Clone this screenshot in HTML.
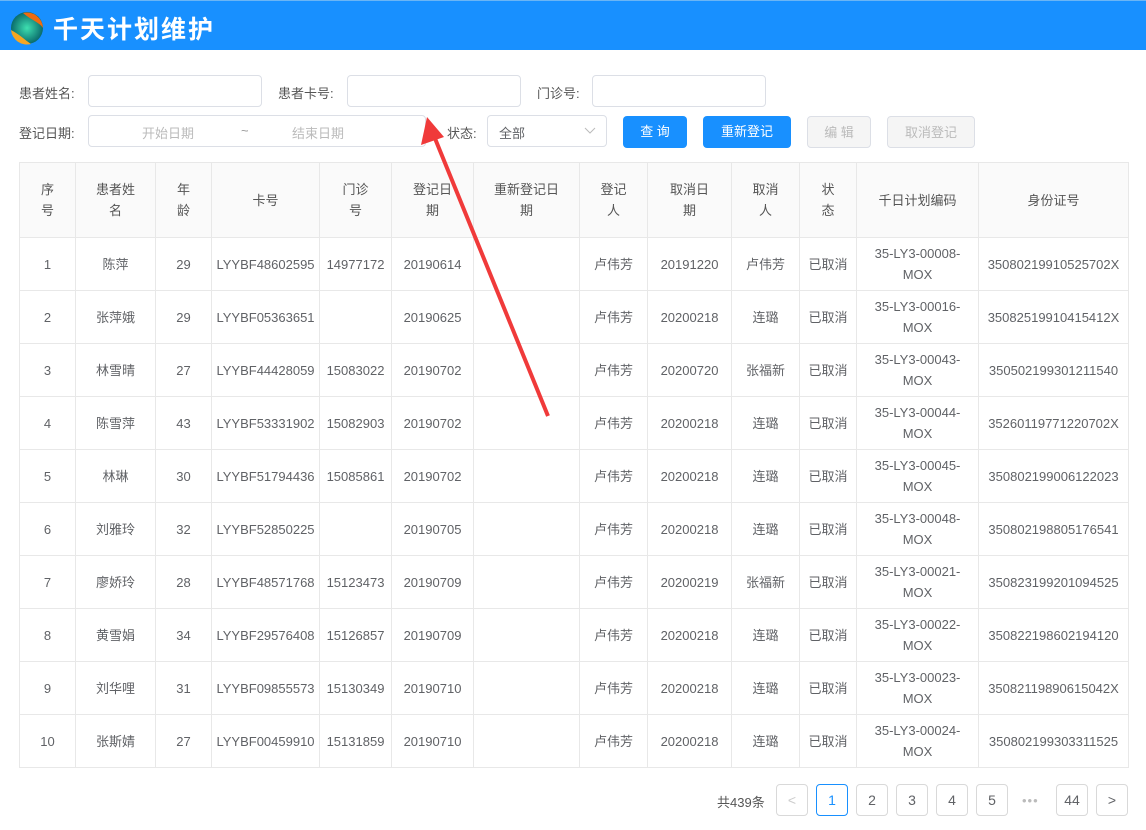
<!DOCTYPE html>
<html><head><meta charset="utf-8"><style>
*{box-sizing:border-box;margin:0;padding:0}
body{width:1146px;height:830px;background:#fff;font-family:"Liberation Sans","Noto Sans CJK SC",sans-serif;font-size:13px;color:#606266;position:relative;overflow:hidden}
.hdr{position:absolute;left:0;top:0;width:1146px;height:50px;background:#1890ff;border-top:1px solid #6bb5f5}
.hdr .t{position:absolute;left:53px;top:9px;color:#fff;font-size:25px;font-weight:bold;letter-spacing:2px}
.lbl{position:absolute;font-size:13px;color:#555}
.inp{position:absolute;border:1px solid #dcdfe6;border-radius:4px;height:32px;background:#fff}
.btn{position:absolute;height:32px;border-radius:4px;font-size:13px;text-align:center;line-height:32px}
.pri{background:#1890ff;color:#fff}
.dis{background:#f5f5f5;color:#bbb;border:1px solid #dcdfe6}
table{position:absolute;left:19px;top:162px;border-collapse:collapse;table-layout:fixed;width:1109px}
td,th{border:1px solid #e8e8e8;text-align:center;font-weight:normal;font-size:13px;color:#606266;line-height:21px;padding:0 2px}
th{background:#fafafa;height:75px;color:#555}
td{height:53px}
.pg{position:absolute;top:784px;width:32px;height:32px;border:1px solid #d9d9d9;border-radius:4px;text-align:center;line-height:30px;font-size:14px;color:#606266}
</style></head><body>
<div class="hdr">
<svg style="position:absolute;left:9px;top:9px" width="36" height="36" viewBox="0 0 36 36">
<defs><radialGradient id="g" cx="50%" cy="50%" r="50%"><stop offset="0" stop-color="#3ee0b0"/><stop offset="1" stop-color="#0a6b6b"/></radialGradient></defs>
<circle cx="18" cy="18" r="16" fill="url(#g)"/>
<path d="M14 3 A16 16 0 0 1 34 18 C30 12 22 10 14 3Z" fill="#f06a10"/>
<path d="M2 20 A16 16 0 0 0 22 34 C16 30 10 24 2 20Z" fill="#f5a623"/>
</svg>
<div class="t">千天计划维护</div></div>

<div class="lbl" style="left:19px;top:83px">患者姓名:</div>
<div class="inp" style="left:88px;top:75px;width:174px"></div>
<div class="lbl" style="left:278px;top:83px">患者卡号:</div>
<div class="inp" style="left:347px;top:75px;width:174px"></div>
<div class="lbl" style="left:537px;top:83px">门诊号:</div>
<div class="inp" style="left:592px;top:75px;width:174px"></div>

<div class="lbl" style="left:19px;top:123px">登记日期:</div>
<div class="inp" style="left:88px;top:115px;width:338px"><span style="position:absolute;left:53px;top:7px;color:#bbb">开始日期</span><span style="position:absolute;left:152px;top:7px;color:#999">~</span><span style="position:absolute;left:203px;top:7px;color:#bbb">结束日期</span></div>
<div class="lbl" style="left:447px;top:123px">状态:</div>
<div class="inp" style="left:487px;top:115px;width:120px"><span style="position:absolute;left:11px;top:7px;color:#606266">全部</span><svg style="position:absolute;right:10px;top:11px" width="12" height="8"><path d="M1 1L6 6L11 1" stroke="#bbb" fill="none"/></svg></div>
<div class="btn pri" style="left:623px;top:116px;width:64px">查 询</div>
<div class="btn pri" style="left:703px;top:116px;width:88px">重新登记</div>
<div class="btn dis" style="left:807px;top:116px;width:64px">编 辑</div>
<div class="btn dis" style="left:887px;top:116px;width:88px">取消登记</div>

<table>
<colgroup><col style="width:56px"><col style="width:80px"><col style="width:56px"><col style="width:108px"><col style="width:72px"><col style="width:82px"><col style="width:106px"><col style="width:68px"><col style="width:84px"><col style="width:68px"><col style="width:57px"><col style="width:122px"><col style="width:150px"></colgroup>
<tr><th>序<br>号</th><th>患者姓<br>名</th><th>年<br>龄</th><th>卡号</th><th>门诊<br>号</th><th>登记日<br>期</th><th>重新登记日<br>期</th><th>登记<br>人</th><th>取消日<br>期</th><th>取消<br>人</th><th>状<br>态</th><th>千日计划编码</th><th>身份证号</th></tr>
<tr><td>1</td><td>陈萍</td><td>29</td><td>LYYBF48602595</td><td>14977172</td><td>20190614</td><td></td><td>卢伟芳</td><td>20191220</td><td>卢伟芳</td><td>已取消</td><td>35-LY3-00008-<br>MOX</td><td>35080219910525702X</td></tr>
<tr><td>2</td><td>张萍娥</td><td>29</td><td>LYYBF05363651</td><td></td><td>20190625</td><td></td><td>卢伟芳</td><td>20200218</td><td>连璐</td><td>已取消</td><td>35-LY3-00016-<br>MOX</td><td>35082519910415412X</td></tr>
<tr><td>3</td><td>林雪晴</td><td>27</td><td>LYYBF44428059</td><td>15083022</td><td>20190702</td><td></td><td>卢伟芳</td><td>20200720</td><td>张福新</td><td>已取消</td><td>35-LY3-00043-<br>MOX</td><td>350502199301211540</td></tr>
<tr><td>4</td><td>陈雪萍</td><td>43</td><td>LYYBF53331902</td><td>15082903</td><td>20190702</td><td></td><td>卢伟芳</td><td>20200218</td><td>连璐</td><td>已取消</td><td>35-LY3-00044-<br>MOX</td><td>35260119771220702X</td></tr>
<tr><td>5</td><td>林琳</td><td>30</td><td>LYYBF51794436</td><td>15085861</td><td>20190702</td><td></td><td>卢伟芳</td><td>20200218</td><td>连璐</td><td>已取消</td><td>35-LY3-00045-<br>MOX</td><td>350802199006122023</td></tr>
<tr><td>6</td><td>刘雅玲</td><td>32</td><td>LYYBF52850225</td><td></td><td>20190705</td><td></td><td>卢伟芳</td><td>20200218</td><td>连璐</td><td>已取消</td><td>35-LY3-00048-<br>MOX</td><td>350802198805176541</td></tr>
<tr><td>7</td><td>廖娇玲</td><td>28</td><td>LYYBF48571768</td><td>15123473</td><td>20190709</td><td></td><td>卢伟芳</td><td>20200219</td><td>张福新</td><td>已取消</td><td>35-LY3-00021-<br>MOX</td><td>350823199201094525</td></tr>
<tr><td>8</td><td>黄雪娟</td><td>34</td><td>LYYBF29576408</td><td>15126857</td><td>20190709</td><td></td><td>卢伟芳</td><td>20200218</td><td>连璐</td><td>已取消</td><td>35-LY3-00022-<br>MOX</td><td>350822198602194120</td></tr>
<tr><td>9</td><td>刘华哩</td><td>31</td><td>LYYBF09855573</td><td>15130349</td><td>20190710</td><td></td><td>卢伟芳</td><td>20200218</td><td>连璐</td><td>已取消</td><td>35-LY3-00023-<br>MOX</td><td>35082119890615042X</td></tr>
<tr><td>10</td><td>张斯婧</td><td>27</td><td>LYYBF00459910</td><td>15131859</td><td>20190710</td><td></td><td>卢伟芳</td><td>20200218</td><td>连璐</td><td>已取消</td><td>35-LY3-00024-<br>MOX</td><td>350802199303311525</td></tr>
</table>

<div class="lbl" style="left:717px;top:792px">共439条</div>
<div class="pg" style="left:776px;color:#ccc">&lt;</div>
<div class="pg" style="left:816px;border-color:#1890ff;color:#1890ff">1</div>
<div class="pg" style="left:856px">2</div>
<div class="pg" style="left:896px">3</div>
<div class="pg" style="left:936px">4</div>
<div class="pg" style="left:976px">5</div>
<div class="lbl" style="left:1022px;top:793px;color:#bbb;letter-spacing:1px">•••</div>
<div class="pg" style="left:1056px">44</div>
<div class="pg" style="left:1096px">&gt;</div>

<svg style="position:absolute;left:0;top:0" width="1146" height="830">
<line x1="548" y1="416" x2="434" y2="136" stroke="#f03a3a" stroke-width="4"/>
<polygon points="427,117 421,145 444,137" fill="#f03a3a"/>
</svg>
</body></html>
